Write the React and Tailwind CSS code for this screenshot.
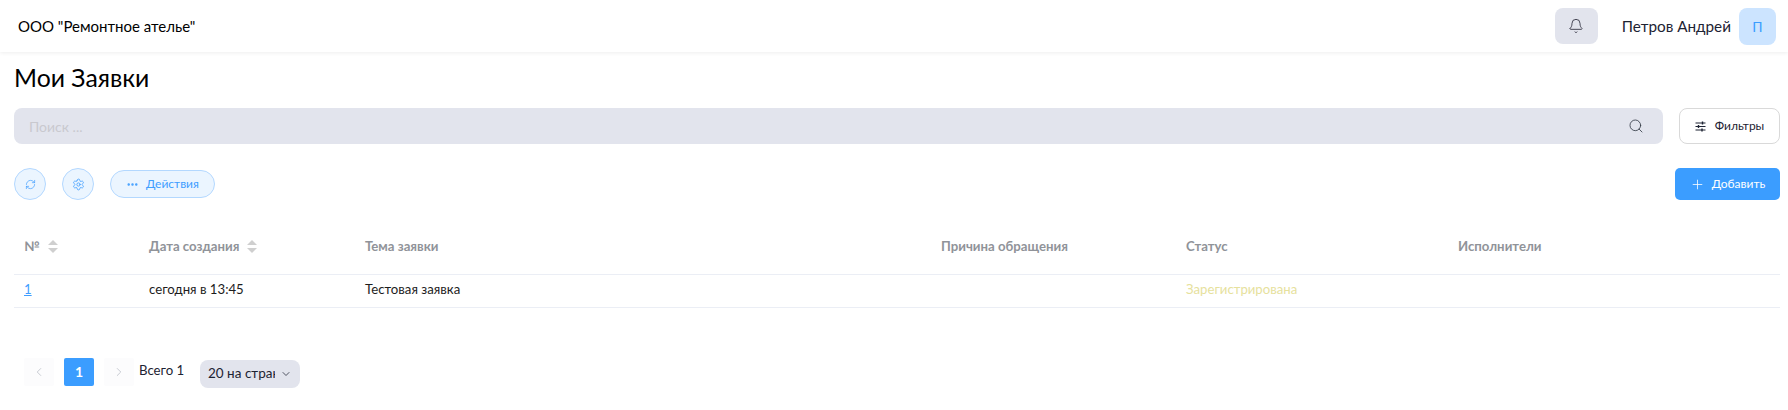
import React from "react";
import { Bell, Search, RefreshCw, Settings, Ellipsis, Plus, ChevronLeft, ChevronRight, ChevronDown } from "lucide-react";

const Sort = () => (
  <svg width="10" height="13" viewBox="0 0 10 13" className="ml-2 shrink-0" fill="#cfcfcf">
    <path d="M5 0 L10 5 H0 Z" />
    <path d="M5 13 L10 8 H0 Z" />
  </svg>
);

const Sliders = () => (
  <svg width="11" height="11" viewBox="0 0 11 11" fill="none" stroke="#1d2333" strokeWidth="1">
    <path d="M0.5 2H10.5M0.5 5.5H10.5M0.5 9H10.5" />
    <path d="M7.5 0.5V3.5M3.5 4V7M7 7.5V10.5" strokeWidth="1.4" />
  </svg>
);

const cols = [
  { w: "w-[125px]", label: "№", sort: true },
  { w: "w-[216px]", label: "Дата создания", sort: true },
  { w: "w-[576px]", label: "Тема заявки" },
  { w: "w-[245px]", label: "Причина обращения" },
  { w: "w-[272px]", label: "Статус" },
  { w: "w-[332px]", label: "Исполнители" },
];

export default function App() {
  return (
    <div className="w-[1788px] h-[410px] bg-white overflow-hidden text-black font-['Lato','Noto_Sans',sans-serif]">
      <header className="h-[52px] flex items-center justify-between pl-[18px] pr-[12px] shadow-[0_1px_4px_rgba(0,0,0,0.07)]">
        <div className="text-[15px]">ООО "Ремонтное ателье"</div>
        <div className="flex items-center">
          <button className="w-[43px] h-[36px] rounded-[8px] bg-[#e2e4ed] flex items-center justify-center mr-[24px]">
            <Bell size={16} strokeWidth={1.25} color="#2a2a3a" />
          </button>
          <span className="text-[15.3px] text-[#1d2333] mr-[8px]">Петров Андрей</span>
          <div className="w-[37px] h-[37px] rounded-[8px] bg-[#cce4ff] text-[#3b9dff] flex items-center justify-center text-[14px]">П</div>
        </div>
      </header>

      <main className="px-[14px] pr-[8px]">
        <h1 className="text-[24.8px] leading-[32px] mt-[10px] font-normal">Мои Заявки</h1>

        <div className="flex mt-[14px] gap-[16px]">
          <div className="flex-1 h-[36px] rounded-[8px] bg-[#e2e4ed] flex items-center justify-between pl-[15px] pr-[19px]">
            <span className="text-[14px] text-[#c9c9cf]">Поиск ...</span>
            <Search size={16} strokeWidth={1.25} color="#333a44" />
          </div>
          <button className="w-[101px] h-[36px] rounded-[8px] border border-[#d9d9d9] bg-white flex items-center justify-center gap-[9px] text-[12px] text-[#1d2333]">
            <Sliders />
            Фильтры
          </button>
        </div>

        <div className="flex items-center justify-between mt-[24px] h-[32px]">
          <div className="flex items-center gap-[16px]">
            <button className="w-[32px] h-[32px] rounded-full border border-[#b3d8ff] bg-[#ebf5ff] flex items-center justify-center text-[#409eff]">
              <RefreshCw size={11} strokeWidth={1.5} />
            </button>
            <button className="w-[32px] h-[32px] rounded-full border border-[#b3d8ff] bg-[#ebf5ff] flex items-center justify-center text-[#409eff]">
              <Settings size={13} strokeWidth={1.5} />
            </button>
            <button className="w-[105px] h-[28px] rounded-full border border-[#b3d8ff] bg-[#ebf5ff] flex items-center justify-center gap-[7px] text-[12px] text-[#409eff]">
              <Ellipsis size={13} strokeWidth={2.5} />
              Действия
            </button>
          </div>
          <button className="w-[105px] h-[32px] rounded-[5px] bg-[#3b9dff] text-white flex items-center justify-center gap-[7px] text-[12px]">
            <Plus size={15} strokeWidth={1.25} />
            Добавить
          </button>
        </div>

        <table className="mt-[20px] table-fixed w-[1766px] border-collapse text-[13.2px]">
          <thead>
            <tr className="h-[54px] border-b border-[#ebeef5]">
              {cols.map((c) => (
                <th key={c.label} className={`${c.w} px-[10px] text-left font-bold text-[#909399]`}>
                  <div className="flex items-center">
                    {c.label}
                    {c.sort && <Sort />}
                  </div>
                </th>
              ))}
            </tr>
          </thead>
          <tbody>
            <tr className="h-[33px] border-b border-[#ebeef5]">
              <td className="px-[10px] pb-[1px]"><a className="underline text-[#409eff]">1</a></td>
              <td className="px-[10px] pb-[1px] text-[#1d1d1d]">сегодня в 13:45</td>
              <td className="px-[10px] pb-[1px] text-[#1d1d1d]">Тестовая заявка</td>
              <td className="px-[10px]"></td>
              <td className="px-[10px] pb-[1px] text-[#e6e19d]">Зарегистрирована</td>
              <td className="px-[10px]"></td>
            </tr>
          </tbody>
        </table>

        <div className="flex items-start mt-[50px] pl-[10px]">
          <button className="w-[30px] h-[28px] rounded-[2px] bg-[#fcfcfd] flex items-center justify-center text-[#c0c4cc]">
            <ChevronLeft size={14} strokeWidth={1.5} />
          </button>
          <button className="w-[30px] h-[28px] ml-[10px] rounded-[2px] bg-[#3b9dff] text-white font-bold text-[14px] flex items-center justify-center">1</button>
          <button className="w-[30px] h-[28px] ml-[10px] rounded-[2px] bg-[#fcfcfd] flex items-center justify-center text-[#c0c4cc]">
            <ChevronRight size={14} strokeWidth={1.5} />
          </button>
          <span className="ml-[5px] text-[13.2px] leading-[24px] text-[#1d2333] w-[61px]">Всего 1</span>
          <div className="w-[100px] h-[28px] mt-[2px] rounded-[8px] bg-[#e2e4ed] flex items-center pl-[8px] pr-[8px] text-[13.5px] text-[#1d2333]">
            <span className="w-[67px] overflow-hidden whitespace-nowrap">20 на странице</span>
            <ChevronDown size={12} strokeWidth={1.5} className="ml-auto" />
          </div>
        </div>
      </main>
    </div>
  );
}
